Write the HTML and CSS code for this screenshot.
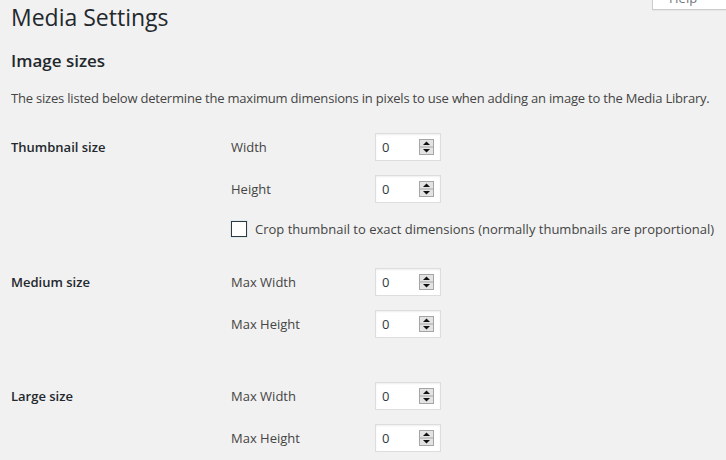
FILE: index.html
```html
<!DOCTYPE html>
<html lang="en">
<head>
  <meta charset="UTF-8" />
  <title>Media Settings</title>
  <link rel="stylesheet" href="styles.css">
</head>
<body>
  <div class="help-tab">Help</div>

  <div class="wrap">
    <h1>Media Settings</h1>

    <h2>Image sizes</h2>
    <p class="intro">The sizes listed below determine the maximum dimensions in pixels to use when adding an image to the Media Library.</p>

    <div class="section thumb">
      <div class="section-title">Thumbnail size</div>
      <div class="fields">
        <div class="field">
          <label>Width</label>
          <div class="num"><span>0</span><svg class="spin" width="15" height="16" viewBox="0 0 15 16"><rect x="0.5" y="0.5" width="14" height="15" fill="#e3e3e3" stroke="#a5a5a5"/><line x1="1" y1="8" x2="14" y2="8" stroke="#a5a5a5"/><path d="M7.5 2.5 L11 6 L4 6 Z" fill="#111"/><path d="M4 10 L11 10 L7.5 13.5 Z" fill="#111"/></svg></div>
        </div>
        <div class="field">
          <label>Height</label>
          <div class="num"><span>0</span><svg class="spin" width="15" height="16" viewBox="0 0 15 16"><rect x="0.5" y="0.5" width="14" height="15" fill="#e3e3e3" stroke="#a5a5a5"/><line x1="1" y1="8" x2="14" y2="8" stroke="#a5a5a5"/><path d="M7.5 2.5 L11 6 L4 6 Z" fill="#111"/><path d="M4 10 L11 10 L7.5 13.5 Z" fill="#111"/></svg></div>
        </div>
        <div class="check">
          <span class="box"></span>
          <span>Crop thumbnail to exact dimensions (normally thumbnails are proportional)</span>
        </div>
      </div>
    </div>

    <div class="section medium">
      <div class="section-title">Medium size</div>
      <div class="fields">
        <div class="field">
          <label>Max Width</label>
          <div class="num"><span>0</span><svg class="spin" width="15" height="16" viewBox="0 0 15 16"><rect x="0.5" y="0.5" width="14" height="15" fill="#e3e3e3" stroke="#a5a5a5"/><line x1="1" y1="8" x2="14" y2="8" stroke="#a5a5a5"/><path d="M7.5 2.5 L11 6 L4 6 Z" fill="#111"/><path d="M4 10 L11 10 L7.5 13.5 Z" fill="#111"/></svg></div>
        </div>
        <div class="field">
          <label>Max Height</label>
          <div class="num"><span>0</span><svg class="spin" width="15" height="16" viewBox="0 0 15 16"><rect x="0.5" y="0.5" width="14" height="15" fill="#e3e3e3" stroke="#a5a5a5"/><line x1="1" y1="8" x2="14" y2="8" stroke="#a5a5a5"/><path d="M7.5 2.5 L11 6 L4 6 Z" fill="#111"/><path d="M4 10 L11 10 L7.5 13.5 Z" fill="#111"/></svg></div>
        </div>
      </div>
    </div>

    <div class="section large">
      <div class="section-title">Large size</div>
      <div class="fields">
        <div class="field">
          <label>Max Width</label>
          <div class="num"><span>0</span><svg class="spin" width="15" height="16" viewBox="0 0 15 16"><rect x="0.5" y="0.5" width="14" height="15" fill="#e3e3e3" stroke="#a5a5a5"/><line x1="1" y1="8" x2="14" y2="8" stroke="#a5a5a5"/><path d="M7.5 2.5 L11 6 L4 6 Z" fill="#111"/><path d="M4 10 L11 10 L7.5 13.5 Z" fill="#111"/></svg></div>
        </div>
        <div class="field">
          <label>Max Height</label>
          <div class="num"><span>0</span><svg class="spin" width="15" height="16" viewBox="0 0 15 16"><rect x="0.5" y="0.5" width="14" height="15" fill="#e3e3e3" stroke="#a5a5a5"/><line x1="1" y1="8" x2="14" y2="8" stroke="#a5a5a5"/><path d="M7.5 2.5 L11 6 L4 6 Z" fill="#111"/><path d="M4 10 L11 10 L7.5 13.5 Z" fill="#111"/></svg></div>
        </div>
      </div>
    </div>
  </div>
</body>
</html>
```

FILE: styles.css
```css
body {
  margin: 0;
  background: #f1f1f1;
  color: #444;
  font-family: "Open Sans", "Noto Sans", sans-serif;
  font-size: 13px;
  overflow: hidden;
}
.wrap {
  padding: 0 0 0 11px;
}
h1 {
  margin: 0;
  padding: 3px 0 0;
  font-size: 23px;
  font-weight: 400;
  line-height: 29px;
  color: #23282d;
}
h2 {
  margin: 18px 0 0;
  font-size: 17px;
  font-weight: 600;
  line-height: 22px;
  color: #23282d;
}
.intro {
  margin: 16px 0 0;
  line-height: 20px;
  letter-spacing: -0.2px;
}
.help-tab {
  position: absolute;
  top: -9px;
  left: 652px;
  width: 90px;
  height: 18px;
  background: #fff;
  border-left: 1px solid #ccc;
  border-bottom: 1px solid #ccc;
  box-shadow: 0 1px 1px rgba(0,0,0,0.04);
  color: #72777c;
  padding-left: 16px;
  line-height: 14px;
}
.section {
  display: flex;
}
.thumb {
  margin-top: 25px;
}
.medium {
  margin-top: 30px;
}
.large {
  margin-top: 44px;
}
.section-title {
  width: 220px;
  line-height: 28px;
  font-weight: 600;
  color: #23282d;
}
.fields {
  display: flex;
  flex-direction: column;
  gap: 14px;
}
.field {
  display: flex;
  align-items: center;
}
.field label {
  width: 144px;
}
.num {
  height: 26px;
  background: #fff;
  border: 1px solid #ddd;
  box-shadow: inset 0 1px 2px rgba(0,0,0,0.07);
  display: flex;
  align-items: center;
  justify-content: space-between;
  padding: 0 6px 0 6px;
  box-sizing: content-box;
  width: 52px;
  color: #32373c;
}
.spin {
  display: block;
}
.check {
  display: flex;
  align-items: center;
  gap: 8px;
  margin-top: 3px;
}
.check .box {
  width: 14px;
  height: 14px;
  border: 1px solid #32373c;
  background: #fff;
  box-shadow: 0 0 0 1px #d8eaf2;
}
```
